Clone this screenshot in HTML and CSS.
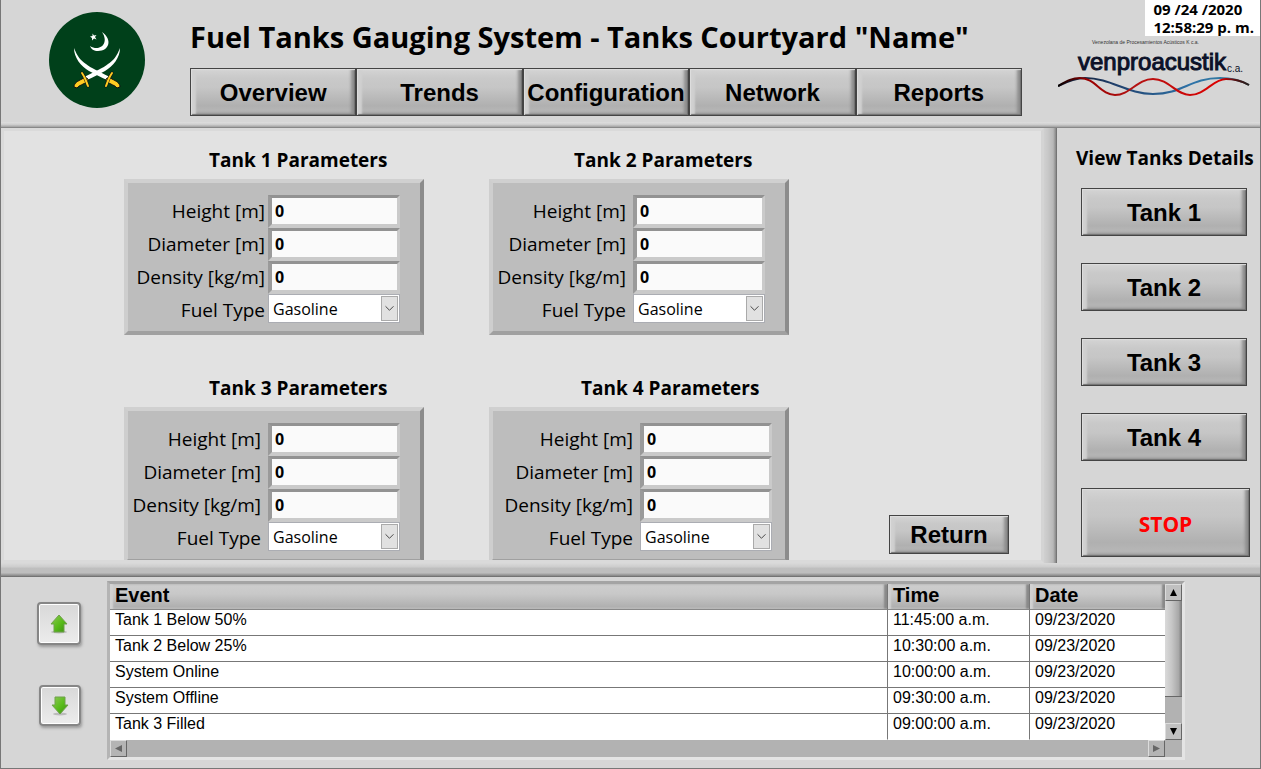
FILE: index.html
```html
<!DOCTYPE html>
<html lang="en">
<head>
<meta charset="utf-8">
<meta name="viewport" content="width=device-width, initial-scale=1">
<title>Fuel Tanks Gauging System</title>
<link rel="stylesheet" href="styles.css">
</head>
<body>
<div class="app">
  <header class="header">
    <svg class="emblem" viewBox="0 0 96 96" role="img" aria-label="Crescent and crossed swords emblem">
      <circle cx="48" cy="48" r="48" fill="#00401a"/>
      <path fill="#fff" d="M53 20C64 28 60 39 49 39C45 39 42 37 41 34C50 40 61 32 53 20Z"/>
      <path fill="#fff" d="M43.500 21.500L45 23.500L47.500 23L46 25L47.500 27.500L45 26.500L43 28.500L43 26L41 24.500L43.500 24Z"/>
      <g id="sword">
        <path fill="#fff" d="M25 36C28 44 32 49 37 52C42 56 49 59 61 65L58 68C51 65 46 62 40 59C32 54 25 46 25 36Z"/>
        <path d="M71 75L68 76C66 73 62 73 57 69L57 67L60 65L63 67C67 69 71 71 71 75Z" fill="#fc2" stroke="#111" stroke-width="1"/>
        <path d="M63 61C60 65 59 69 57 74" stroke="#111" stroke-width="3" fill="none" stroke-linecap="round"/>
        <path d="M63 61C60 65 59 69 57 74" stroke="#fc2" stroke-width="2" fill="none" stroke-linecap="round"/>
      </g>
      <use href="#sword" transform="matrix(-1 0 0 1 96 0)"/>
    </svg>
    <div class="header-center">
      <h1 class="title">Fuel Tanks Gauging System - Tanks Courtyard "Name"</h1>
      <nav class="nav">
        <button class="btn" type="button">Overview</button>
        <button class="btn" type="button">Trends</button>
        <button class="btn" type="button">Configuration</button>
        <button class="btn" type="button">Network</button>
        <button class="btn" type="button">Reports</button>
      </nav>
    </div>
    <svg class="brand" viewBox="0 0 192 60" role="img" aria-label="Venproacustik c.a.">
      <defs>
        <linearGradient id="blue" x1="0" x2="1"><stop offset="0" stop-color="#0b1020"/><stop offset=".3" stop-color="#20406c"/><stop offset=".7" stop-color="#2e73a8"/><stop offset=".9" stop-color="#347a9e"/><stop offset="1" stop-color="#333"/></linearGradient>
        <linearGradient id="red" x1="0" x2="1"><stop offset="0" stop-color="#000"/><stop offset=".15" stop-color="#900"/><stop offset=".4" stop-color="#b31212"/><stop offset=".85" stop-color="#d00"/><stop offset=".93" stop-color="#511"/><stop offset="1" stop-color="#222"/></linearGradient>
      </defs>
      <text class="brand-tag" x="34" y="6">Venezolana de Procesamientos Acústicos K c.a.</text>
      <text class="brand-name" x="20" y="32">venproacustik</text>
      <text class="brand-suffix" x="169" y="34">c.a.</text>
      <path fill="none" stroke="url(#blue)" stroke-width="2" d="M0 48C10 43 18 40 27 40C53 40 69 56 95 56C125 56 132 40 162 40C174 40 184 43 191 47"/>
      <path fill="none" stroke="url(#red)" stroke-width="2" d="M0 48C9 43 14 40 22 40C37 40 43 57 57 57C72 57 79 41 95 41C111 41 118 57 132 57C147 57 155 41 168 41C176 41 184 43 191 47"/>
    </svg>
    <div class="clock"><span>09 /24 /2020</span><span>12:58:29 p. m.</span></div>
  </header>
  <div class="divider-top"></div>

  <div class="middle">
    <main class="main">
      <div class="tanks">
        <section class="tank tank-tight">
          <h2 class="tank-title">Tank 1 Parameters</h2>
          <div class="panel">
            <label for="h1">Height [m]</label><input id="h1" type="text" value="0">
            <label for="d1">Diameter [m]</label><input id="d1" type="text" value="0">
            <label for="k1">Density [kg/m]</label><input id="k1" type="text" value="0">
            <label for="f1">Fuel Type</label>
            <div class="select"><select id="f1"><option>Gasoline</option><option>Diesel</option></select><svg viewBox="0 0 17 25"><path d="M4 10L8.500 14.500L13 10"/></svg></div>
          </div>
        </section>
        <section class="tank">
          <h2 class="tank-title">Tank 2 Parameters</h2>
          <div class="panel">
            <label for="h2">Height [m]</label><input id="h2" type="text" value="0">
            <label for="d2">Diameter [m]</label><input id="d2" type="text" value="0">
            <label for="k2">Density [kg/m]</label><input id="k2" type="text" value="0">
            <label for="f2">Fuel Type</label>
            <div class="select"><select id="f2"><option>Gasoline</option><option>Diesel</option></select><svg viewBox="0 0 17 25"><path d="M4 10L8.500 14.500L13 10"/></svg></div>
          </div>
        </section>
        <section class="tank">
          <h2 class="tank-title">Tank 3 Parameters</h2>
          <div class="panel">
            <label for="h3">Height [m]</label><input id="h3" type="text" value="0">
            <label for="d3">Diameter [m]</label><input id="d3" type="text" value="0">
            <label for="k3">Density [kg/m]</label><input id="k3" type="text" value="0">
            <label for="f3">Fuel Type</label>
            <div class="select"><select id="f3"><option>Gasoline</option><option>Diesel</option></select><svg viewBox="0 0 17 25"><path d="M4 10L8.500 14.500L13 10"/></svg></div>
          </div>
        </section>
        <section class="tank tank-wide">
          <h2 class="tank-title">Tank 4 Parameters</h2>
          <div class="panel">
            <label for="h4">Height [m]</label><input id="h4" type="text" value="0">
            <label for="d4">Diameter [m]</label><input id="d4" type="text" value="0">
            <label for="k4">Density [kg/m]</label><input id="k4" type="text" value="0">
            <label for="f4">Fuel Type</label>
            <div class="select"><select id="f4"><option>Gasoline</option><option>Diesel</option></select><svg viewBox="0 0 17 25"><path d="M4 10L8.500 14.500L13 10"/></svg></div>
          </div>
        </section>
      </div>
      <button class="btn btn-return" type="button">Return</button>
    </main>
    <div class="divider-v"></div>
    <aside class="side">
      <h2 class="side-title">View Tanks Details</h2>
      <div class="side-buttons">
        <button class="btn" type="button">Tank 1</button>
        <button class="btn" type="button">Tank 2</button>
        <button class="btn" type="button">Tank 3</button>
        <button class="btn" type="button">Tank 4</button>
        <button class="btn btn-stop" type="button">STOP</button>
      </div>
    </aside>
  </div>
  <div class="divider-h"></div>

  <footer class="events">
    <svg width="0" height="0" class="defs"><defs><linearGradient id="green" x1="0" y1="0" x2="1" y2="1"><stop offset="0" stop-color="#8fc957"/><stop offset=".55" stop-color="#57bb18"/><stop offset="1" stop-color="#3c8d16"/></linearGradient></defs></svg>
    <div class="movers">
      <button class="mover" type="button" aria-label="Scroll up"><svg viewBox="0 0 20 20"><ellipse cx="10" cy="18" rx="8" ry="1.500" fill="#bbb"/><path d="M10 1L18 10H15V18H5V10H2Z" fill="url(#green)" stroke="#6fa14b"/></svg></button>
      <button class="mover" type="button" aria-label="Scroll down"><svg viewBox="0 0 20 20"><ellipse cx="10" cy="18" rx="7" ry="1.500" fill="#bbb"/><path d="M10 18L18 9H15V1H5V9H2Z" fill="url(#green)" stroke="#6fa14b"/></svg></button>
    </div>
    <div class="grid-frame">
      <table class="event-table">
        <colgroup><col><col class="col-time"><col class="col-date"></colgroup>
        <thead><tr><th scope="col">Event</th><th scope="col">Time</th><th scope="col">Date</th></tr></thead>
        <tbody>
          <tr><td>Tank 1 Below 50%</td><td>11:45:00 a.m.</td><td>09/23/2020</td></tr>
          <tr><td>Tank 2 Below 25%</td><td>10:30:00 a.m.</td><td>09/23/2020</td></tr>
          <tr><td>System Online</td><td>10:00:00 a.m.</td><td>09/23/2020</td></tr>
          <tr><td>System Offline</td><td>09:30:00 a.m.</td><td>09/23/2020</td></tr>
          <tr><td>Tank 3 Filled</td><td>09:00:00 a.m.</td><td>09/23/2020</td></tr>
        </tbody>
      </table>
      <div class="scroll-v">
        <button type="button" aria-label="Rows up"><svg viewBox="0 0 9 9"><path d="M4.500 1L8 8H1Z"/></svg></button>
        <div class="thumb"></div>
        <button type="button" aria-label="Rows down"><svg viewBox="0 0 9 9"><path d="M4.500 8L8 1H1Z"/></svg></button>
      </div>
      <div class="scroll-h">
        <button type="button" aria-label="Columns left"><svg viewBox="0 0 9 9"><path d="M1 4.500L8 1V8Z"/></svg></button>
        <button type="button" aria-label="Columns right"><svg viewBox="0 0 9 9"><path d="M8 4.500L1 1V8Z"/></svg></button>
      </div>
    </div>
  </footer>
</div>
</body>
</html>
```
FILE: styles.css
```css
* { box-sizing: border-box; }

body {
  margin: 0;
  background: #d6d6d6;
  color: #000;
  font-family: "Open Sans", "Noto Sans", sans-serif;
}

h1, h2 { margin: 0; font-weight: 700; }
button, input, select { font-family: inherit; color: inherit; margin: 0; }

.app {
  display: flex;
  flex-direction: column;
  height: 100vh;
  border: 1px solid #777;
  border-top: 0;
}

/* Header */
.header {
  position: relative;
  display: grid;
  grid-template-columns: 141px minmax(0, 832px) 1fr;
  padding: 14px 10px 6px 48px;
}
.emblem { width: 96px; height: 96px; margin-top: -2px; }
.header-center { display: flex; flex-direction: column; gap: 8px; }
.title { font-size: 29px; line-height: 46px; white-space: nowrap; }
.nav { display: flex; }
.nav .btn { flex: 1 1 0; min-width: 0; }

.brand { width: 192px; height: 60px; justify-self: end; margin-top: 24px; }
.brand-tag { font: 5px "Liberation Sans", Arial, sans-serif; fill: #333; }
.brand-name { font: 24px "Liberation Sans", Arial, sans-serif; fill: #0b1128; stroke: #0b1128; stroke-width: 1; }
.brand-suffix { font: 10px "Liberation Sans", Arial, sans-serif; fill: #0b1128; }

.clock {
  position: absolute;
  top: 0;
  right: 0;
  display: flex;
  flex-direction: column;
  padding: 0 6px 0 8px;
  background: #fff;
  font-size: 15px;
  font-weight: 700;
  line-height: 18px;
  white-space: nowrap;
}

/* Bevelled dividers */
.divider-top { height: 6px; background: linear-gradient(#dedede, #cfcfcf 40%, #aaa 75%, #777); }
.divider-v {
  width: 13px;
  background: linear-gradient(90deg, #d0d0d0, #c8c8c8 30%, #b8b8b8 70%, #8c8c8c 90%, #666);
}
.divider-h {
  height: 14px;
  background: linear-gradient(#dadada, #cecece 25%, #bebebe 40%, #bebebe 70%, #8c8c8c 90%, #666);
}

/* Raised push button */
.btn {
  height: 48px;
  padding: 2px 0 0;
  border: 1px solid #444;
  border-radius: 0;
  background: linear-gradient(#d4d4d4 0, #c9c9c9 20%, #c6c6c6 40%, #b0b0b0 80%, #bababa 100%);
  box-shadow: inset 1px 1px 1px #dedede, inset -1px -1px 1px #707070, inset 5px 0 2px #d0d0d0, inset -4px -2px 3px #8e8e8e;
  font: 700 24px "Liberation Sans", Arial, sans-serif;
}

/* Middle */
.middle { display: flex; flex: 1 1 0; min-height: 0; }
.main {
  flex: 1;
  display: flex;
  gap: 100px;
  padding-left: 120px;
  border: 3px solid #dadada;
  border-right-color: #d4d4d4;
  background: #e2e2e2;
  overflow: hidden;
}
.tanks { display: grid; grid-template-columns: 300px 300px; column-gap: 65px; align-content: start; }
.tank { height: 228px; padding-top: 14px; }
.tank-title { padding-left: 85px; font-size: 19px; line-height: 30px; margin-bottom: 4px; white-space: nowrap; }
.tank-wide .tank-title { padding-left: 92px; }
.panel {
  display: grid;
  grid-template-columns: 133px 132px;
  grid-template-rows: repeat(3, 33px) 29px;
  column-gap: 7px;
  height: 156px;
  padding-top: 12px;
  border: 4px solid;
  border-color: #d0d0d0 #8c8c8c #a0a0a0 #cecece;
  background: #bdbdbd;
}
.tank-tight .panel { grid-template-columns: 137px 132px; column-gap: 3px; }
.tank-wide .panel { grid-template-columns: 140px 132px; }
.panel label { font-size: 19px; line-height: 33px; text-align: right; white-space: nowrap; }
.panel input {
  width: 132px;
  height: 33px;
  padding: 0 3px;
  border: 4px solid;
  border-color: #929292 #cacaca #cacaca #9a9a9a;
  border-width: 3px 3px 4px 4px;
  border-radius: 0;
  background: #fafafa;
  font-size: 16px;
  font-weight: 700;
}
.select { position: relative; height: 29px; }
.select select {
  appearance: none;
  width: 132px;
  height: 29px;
  padding: 0 20px 0 4px;
  border: 1px solid #abadb3;
  border-radius: 0;
  background: #fff;
  font-size: 16px;
}
.select svg {
  position: absolute;
  top: 2px;
  right: 2px;
  width: 17px;
  height: 25px;
  border: 1px solid #aaa;
  background: #e1e1e1;
  fill: none;
  stroke: #333;
  pointer-events: none;
}
.btn-return { align-self: flex-end; width: 120px; height: 39px; padding-top: 1px; margin-bottom: 6px; }

.side { display: flex; flex-direction: column; width: 203px; padding: 15px 0 0 19px; }
.side-title { font-size: 19px; line-height: 30px; white-space: nowrap; margin-bottom: 15px; }
.side-buttons { display: flex; flex-direction: column; gap: 27px; padding: 0 10px 0 5px; }
.side-buttons .btn { width: 166px; }
.side-buttons .btn-stop { width: 169px; height: 69px; color: #f00; font: 700 21px "Open Sans", sans-serif; }

/* Events */
.events { display: flex; padding: 4px 75px 8px 35px; }
.defs { position: absolute; }
.movers { display: flex; flex-direction: column; align-items: flex-end; width: 45px; gap: 40px; padding-top: 21px; }
.mover {
  width: 44px;
  height: 43px;
  padding: 0;
  border: 2px solid #868686;
  border-radius: 4px;
  background: linear-gradient(#d8d8d8, #ececec);
  box-shadow: inset 0 0 0 1px #fff, 1px 2px 3px #999;
}
.mover + .mover { width: 42px; height: 41px; }
.mover svg { display: block; width: 20px; height: 20px; margin: 0 auto; }

.grid-frame {
  flex: 1;
  display: grid;
  grid-template-columns: 1fr 17px;
  margin-left: 26px;
  border: 3px solid;
  border-color: #a4a4a4 #e4e4e4 #e4e4e4 #b4b4b4;
  background: #b2b2b2;
}
.event-table {
  width: 100%;
  table-layout: fixed;
  border-collapse: separate;
  border-spacing: 0;
  background: #fff;
  font-family: "Liberation Sans", Arial, sans-serif;
}
.col-time { width: 142px; }
.col-date { width: 135px; }
.event-table th, .event-table td {
  padding: 0 5px;
  text-align: left;
  border-right: 1px solid #777;
  white-space: nowrap;
}
.event-table th {
  height: 26px;
  padding: 0 5px 3px;
  border-bottom: 1px solid #888;
  background: linear-gradient(#cecece, #c8c8c8 40%, #b0b0b0 90%, #c0c0c0);
  box-shadow: inset 3px 0 2px #d2d2d2, inset -3px 0 2px #888;
  font-size: 20px;
  line-height: 22px;
}
.event-table td { height: 26px; padding-bottom: 5px; border-bottom: 1px solid #777; font-size: 16px; line-height: 20px; }
.event-table tr > :last-child { border-right: 0; }
.event-table tbody tr:last-child td { border-bottom-color: #fff; }

.scroll-v { display: flex; flex-direction: column; }
.scroll-v .thumb {
  flex: 0 0 96px;
  margin-bottom: auto;
  border-bottom: 1px solid #666;
  background: linear-gradient(90deg, #dadada, #c6c6c6 40%, #a8a8a8 80%, #777);
}
.scroll-h { display: flex; justify-content: space-between; height: 17px; }
.scroll-v button, .scroll-h button {
  display: grid;
  place-items: center;
  width: 17px;
  height: 17px;
  padding: 0;
  border: 1px solid;
  border-color: #dcdcdc #666 #666 #dcdcdc;
  background: #c0c0c0;
}
.scroll-h button { background: #b4b4b4; fill: #666; }
.scroll-v svg, .scroll-h svg { width: 9px; height: 9px; }
```
